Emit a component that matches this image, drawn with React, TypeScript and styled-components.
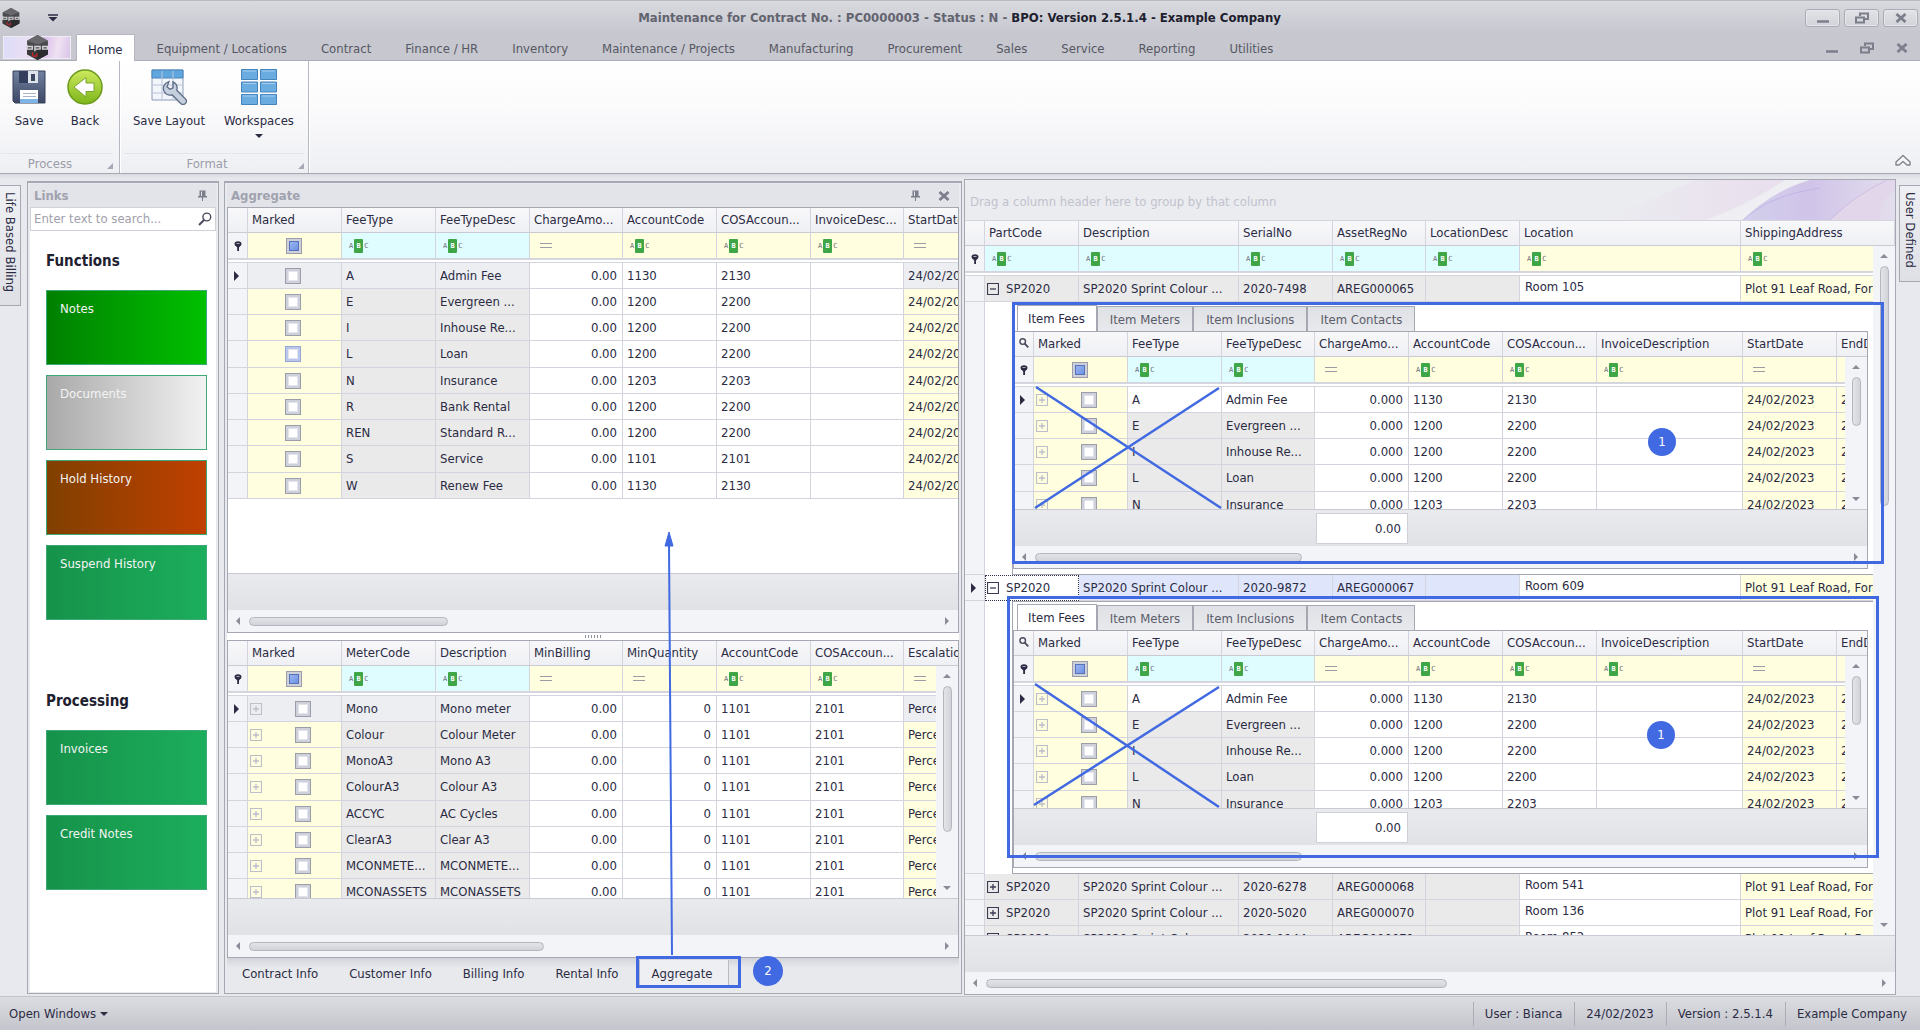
import React from "react";
import styled, { createGlobalStyle, css } from "styled-components";

/* ---------- theme values ---------- */
const c = {
  text: "#2b2b44",
  muted: "#9a9ca8",
  line: "#d3d4de",
  edge: "#a5a7b3",
  yellow: "#fffedf",
  cyan: "#dffdff",
  grey: "#eaeaea",
  active: "#eceef2",
  selected: "#dfe6fb",
  white: "#ffffff",
  mark: "#4169e1",
};

type Tone = "yellow" | "cyan" | "grey" | "white" | "active" | "selected";

const GlobalStyle = createGlobalStyle`
  *, *::before, *::after { box-sizing: border-box; }
  body {
    margin: 0;
    background: #e6e8ec;
    color: ${c.text};
    font: 13px/16px "DejaVu Sans Condensed", "DejaVu Sans", Tahoma, "Noto Sans", sans-serif;
  }
  button, input { font: inherit; color: inherit; }
  button { background: none; border: 0; padding: 0; margin: 0; }
`;

/* ---------- shell ---------- */
const Window = styled.div`
  position: relative;
  display: flex;
  flex-direction: column;
  height: 100vh;
  min-height: 720px;
  overflow: hidden;
`;

const TopArea = styled.header`
  background: linear-gradient(#d9dade, #c6c7cf 55%, #c6c7cf);
  border-top: 1px solid #b9bac2;
`;

const TitleBar = styled.div`
  display: grid;
  grid-template-columns: 120px 1fr 120px;
  align-items: center;
  height: 33px;
  padding: 0 2px 0 1px;
`;

const QuickAccess = styled.div`
  display: flex;
  align-items: center;
  gap: 27px;
`;

const Title = styled.h1`
  margin: 0;
  font-size: 13px;
  line-height: 16px;
  font-weight: bold;
  text-align: center;
  color: #62636f;
  white-space: nowrap;
  overflow: hidden;
  strong { color: #20202e; }
`;

const WindowButtons = styled.div`
  display: flex;
  justify-content: flex-end;
  gap: 4px;
`;

const FrameButton = styled.button<{ $flat?: boolean }>`
  display: flex;
  align-items: center;
  justify-content: center;
  width: 35px;
  height: 18px;
  color: #7c7e8c;
  ${(p) =>
    !p.$flat &&
    css`
      border: 1px solid #a9abb6;
      border-radius: 3px;
      background: linear-gradient(#e2e3e7, #d2d3d9);
      box-shadow: inset 0 0 0 1px #e6e7eb;
    `}
`;

const MenuRow = styled.nav`
  display: flex;
  align-items: flex-end;
  gap: 10px;
  height: 27px;
  border-bottom: 1px solid #a9abb6;
`;

const AppButton = styled.button`
  display: flex;
  align-items: center;
  justify-content: center;
  align-self: center;
  width: 68px;
  height: 23px;
  margin: 0 -5px 0 3px;
  border: 1px solid #f0ecf6;
  background: linear-gradient(100deg, #dcdcf8, #e9dff4 35%, #dcc0ea 60%, #efe2f2 80%, #d9c4e8);
`;

const MenuTab = styled.button<{ $active?: boolean }>`
  height: 26px;
  padding: 3px 12px 0;
  color: #565763;
  white-space: nowrap;
  ${(p) =>
    p.$active &&
    css`
      height: 27px;
      margin-bottom: -1px;
      padding: 3px 11px 0;
      color: ${c.text};
      background: #fff;
      border: 1px solid #b5b6c0;
      border-bottom: 0;
    `}
`;

const MdiButtons = styled.div`
  display: flex;
  margin: 0 1px 3px auto;
`;

/* ---------- ribbon ---------- */
const Ribbon = styled.section`
  display: flex;
  height: 113px;
  flex: none;
  background: linear-gradient(#ffffff, #fbfbfc 40%, #eeeff3);
  border-bottom: 1px solid ${c.edge};
`;

const Group = styled.div<{ $left: number; $right: number }>`
  display: flex;
  flex-direction: column;
  border-right: 1px solid #b6b8c2;
  box-shadow: 1px 0 0 #fff;
  padding: 0 ${(p) => p.$right}px 0 ${(p) => p.$left}px;
`;

const GroupTools = styled.div`
  display: flex;
  flex: 1;
`;

const Tool = styled.button<{ $w: number }>`
  display: flex;
  flex-direction: column;
  align-items: center;
  width: ${(p) => p.$w}px;
  padding-top: 8px;
  gap: 8px;
  white-space: nowrap;
`;

const ToolLabel = styled.span`
  display: flex;
  flex-direction: column;
  align-items: center;
  gap: 5px;
`;

const GroupTitle = styled.div`
  display: flex;
  align-items: center;
  height: 20px;
  color: ${c.muted};
  border-top: 1px solid #e4e5ea;
  span { flex: 1; text-align: center; padding-right: 8px; }
`;

const Corner = styled.svg`
  align-self: flex-end;
  margin-bottom: 4px;
`;

const CollapseButton = styled.button`
  margin: auto 9px 2px auto;
`;

/* ---------- docking area ---------- */
const Workspace = styled.main`
  display: flex;
  flex: 1;
  min-height: 0;
  padding-top: 5px;
  background: linear-gradient(#d9dbe0, #e8e9ee 5px);
`;

const SideTab = styled.button<{ $right?: boolean; $h: number }>`
  writing-mode: vertical-rl;
  width: 21px;
  height: ${(p) => p.$h}px;
  margin: 6px ${(p) => (p.$right ? 0 : 6)}px 0 ${(p) => (p.$right ? 3 : 0)}px;
  padding: 6px 0;
  text-align: left;
  white-space: nowrap;
  border: 1px solid ${c.edge};
  ${(p) => (p.$right ? "border-right: 0;" : "border-left: 0;")}
  background: linear-gradient(#eff0f4, #dfe0e5);
`;

const Panel = styled.section<{ $w: number }>`
  display: flex;
  flex-direction: column;
  flex: none;
  width: ${(p) => p.$w}px;
  margin: 2px 5px 2px 0;
  padding: 1px 2px;
  border: 1px solid ${c.edge};
  border-top-width: 2px;
  background: #e9eaee;
`;

const PanelTitle = styled.div`
  display: flex;
  align-items: center;
  height: 23px;
  flex: none;
  padding: 0 9px 0 4px;
  gap: 18px;
  background: #e3e4e9;
  h2 {
    flex: 1;
    margin: 0;
    font-size: 13px;
    line-height: 16px;
    color: #a0a2ae;
  }
`;

const IconButton = styled.button`
  display: flex;
  align-items: center;
  color: #7c7e8c;
`;

const SearchBox = styled.label`
  display: flex;
  align-items: center;
  flex: none;
  height: 24px;
  padding: 0 3px;
  background: #fff;
  border: 1px solid #cfd0d8;
`;

const SearchInput = styled.input`
  flex: 1;
  min-width: 0;
  padding: 0;
  border: 0;
  outline: 0;
  background: none;
  &::placeholder { color: #9fa0ab; opacity: 1; }
`;

const LinkList = styled.div`
  display: flex;
  flex-direction: column;
  flex: 1;
  gap: 10px;
  padding: 20px 9px 0 16px;
  background: #fff;
  overflow: hidden;
`;

const LinkHeading = styled.h3<{ $later?: boolean }>`
  margin: ${(p) => (p.$later ? "61px" : "0")} 0 9px;
  font-size: 15px;
  line-height: 20px;
  color: #20202e;
`;

const LinkTile = styled.button<{ $from: string; $to: string }>`
  display: flex;
  flex: none;
  height: 75px;
  padding: 10px 13px;
  color: #f4f4f4;
  border: 1px solid #3fa878;
  background: linear-gradient(90deg, ${(p) => p.$from}, ${(p) => p.$to});
`;

/* ---------- grid ---------- */
const GridBox = styled.div<{ $grow: number }>`
  display: flex;
  flex-direction: column;
  flex: ${(p) => p.$grow} 1 0;
  min-height: 0;
  min-width: 0;
  border: 1px solid ${c.edge};
  background: #fff;
`;

const GridBody = styled.div`
  display: grid;
  grid-template: 25px minmax(0, 1fr) / minmax(0, 1fr) 22px;
  flex: 1;
  min-height: 0;
  border-bottom: 1px solid #c9cad3;
`;

const TableClip = styled.div`
  grid-area: 1 / 1 / 3 / 3;
  overflow: hidden;
`;

const Table = styled.table<{ $stretch?: boolean }>`
  table-layout: fixed;
  width: ${(p) => (p.$stretch ? "100%" : "1px")};
  min-width: 100%;
  border-collapse: separate;
  border-spacing: 0;
`;

const headCell = css`
  height: 25px;
  padding: 0 5px 0 4px;
  overflow: hidden;
  white-space: nowrap;
  border-right: 1px solid ${c.line};
  border-bottom: 1px solid #c9cad3;
  background: linear-gradient(#f8f8fa, #eff0f4);
`;

const Th = styled.th`
  ${headCell}
  font-weight: normal;
  text-align: left;
`;

const ThIcon = styled.td`
  ${headCell}
  padding: 0 3px 0 5px;
`;

const Td = styled.td<{ $tone: Tone; $align?: "right" | "center"; $top?: boolean; $focus?: boolean }>`
  height: 26px;
  padding: 0 5px 0 4px;
  overflow: hidden;
  white-space: nowrap;
  text-align: ${(p) => p.$align || "left"};
  vertical-align: ${(p) => (p.$top ? "top" : "middle")};
  ${(p) => p.$top && "padding-top: 3px; padding-left: 5px;"}
  border-right: 1px solid ${c.line};
  border-bottom: 1px solid ${c.line};
  background: ${(p) => c[p.$tone]};
  ${(p) => p.$focus && "border: 1px dotted #33334a; padding-left: 3px;"}
`;

const Indicator = styled.td<{ $h?: number }>`
  height: ${(p) => p.$h || 26}px;
  padding: 0 0 0 6px;
  border-right: 1px solid ${c.line};
  border-bottom: 1px solid ${c.line};
  background: #f3f4f8;
  svg { display: block; }
`;

const SplitCell = styled.td`
  height: 4px;
  padding: 0;
  border-top: 1px solid #d6d7df;
  border-bottom: 1px solid ${c.line};
  background: #fff;
`;

const Row = styled.tr`
  &:nth-child(4n) > td { height: 27px; }
`;

const CellFlex = styled.div`
  display: flex;
  align-items: center;
  gap: 7px;
  margin-left: -2px;
`;

const CheckHolder = styled.div`
  display: flex;
  flex: 1;
  justify-content: center;
`;

const Check = styled.input<{ $look?: "filter" | "hot" }>`
  appearance: none;
  width: 16px;
  height: 16px;
  margin: 0;
  border: 1px solid ${(p) => (p.$look === "hot" ? "#9aa6cf" : "#9b9dab")};
  background: ${(p) => (p.$look === "filter" ? "linear-gradient(135deg, #a9c1f5, #5f86df)" : "#fff")};
  box-shadow: inset 0 0 0 2px ${(p) => (p.$look === "hot" ? "#b9c7ee" : "#cfd1da")}
    ${(p) => (p.$look === "filter" ? ", inset 0 0 0 3px #5871b8" : ", inset 0 0 0 3px #e4e5ec")};
`;

const ExpandButton = styled.button<{ $dim?: boolean }>`
  display: flex;
  flex: none;
  color: ${(p) => (p.$dim ? "#bdbfca" : "#3b3b54")};
`;

const Abc = styled.span`
  display: flex;
  align-items: center;
  gap: 1px;
  margin-left: 3px;
  font: 7px/14px "DejaVu Sans Mono", monospace;
  color: #6d6e78;
  b {
    width: 9px;
    border-radius: 1px;
    text-align: center;
    color: #fff;
    background: #3fa648;
  }
`;

const Equals = styled.span`
  display: block;
  width: 12px;
  height: 5px;
  margin-left: 6px;
  border: solid #9b9ca5;
  border-width: 1px 0;
`;

const Footer = styled.div`
  display: flex;
  flex: none;
  height: 36px;
  padding-left: 302px;
  align-items: center;
  background: linear-gradient(#e9eaee, #e1e2e6);
`;

const Summary = styled.output`
  width: 92px;
  height: 31px;
  padding: 7px 6px;
  text-align: right;
  background: #fff;
  border: 1px solid #cfd0d8;
`;

const HBar = styled.div`
  display: flex;
  align-items: center;
  flex: none;
  height: 22px;
  padding: 0 9px 0 8px;
  gap: 9px;
  color: #8a8c98;
  background: #f3f4f7;
`;

const HTrack = styled.div`
  flex: 1;
  display: flex;
`;

const HThumb = styled.div<{ $share: number }>`
  width: ${(p) => p.$share}%;
  height: 9px;
  border: 1px solid #b3b5bf;
  border-radius: 5px;
  background: linear-gradient(#e3e4e8, #d2d3d9);
`;

const VBar = styled.div`
  grid-area: 2 / 2;
  display: flex;
  flex-direction: column;
  align-items: center;
  padding: 8px 0;
  gap: 8px;
  color: #8a8c98;
  background: #f3f4f7;
  min-height: 0;
`;

const VTrack = styled.div`
  flex: 1;
  min-height: 0;
`;

const VThumb = styled.div<{ $share: number }>`
  width: 9px;
  height: ${(p) => p.$share}%;
  border: 1px solid #b3b5bf;
  border-radius: 5px;
  background: linear-gradient(90deg, #e3e4e8, #d2d3d9);
`;

const Splitter = styled.div`
  display: flex;
  align-items: center;
  justify-content: center;
  flex: none;
  height: 7px;
  background: #fff;
  span {
    width: 17px;
    height: 3px;
    background: repeating-linear-gradient(90deg, #8d8f9a 0 1px, transparent 1px 3px);
  }
`;

const BottomTabs = styled.div`
  display: flex;
  align-items: center;
  flex: none;
  height: 34px;
  padding-bottom: 2px;
  background: linear-gradient(#d2d4da, #e8e9ed 10px);
`;

const BottomTab = styled.button<{ $active?: boolean }>`
  height: 28px;
  padding: 0 16px 0 15px;
  white-space: nowrap;
  ${(p) =>
    p.$active &&
    css`
      margin-left: 4px;
      padding: 0 16px 0 12px;
      background: #eeeff2;
      border: solid #b9bbc5;
      border-width: 0 1px;
    `}
`;

/* ---------- right side ---------- */
const MasterPanel = styled.section`
  display: flex;
  flex-direction: column;
  flex: 1;
  min-width: 0;
  margin: 0 0 1px -3px;
  border: 1px solid ${c.edge};
  background: #ebecf0;
  & > div:last-child { border: 0; }
`;

const GroupPanel = styled.div`
  display: flex;
  justify-content: space-between;
  align-items: center;
  height: 41px;
  flex: none;
  padding-left: 5px;
  color: #c1c2cd;
  border-bottom: 1px solid ${c.line};
  span { padding-top: 3px; }
`;

const DetailCell = styled.td`
  height: 273px;
  padding: 0 21px 0 27px;
  background: #fff;
`;

const Detail = styled.div`
  display: flex;
  flex-direction: column;
  height: 273px;
  padding: 0 5px 5px 0;
  border: 1px solid ${c.edge};
  background: #fff;
`;

const DetailTabs = styled.div`
  display: flex;
  align-items: flex-end;
  height: 28px;
  flex: none;
  padding-left: 4px;
`;

const DetailTab = styled.button<{ $active?: boolean }>`
  height: ${(p) => (p.$active ? 27 : 25)}px;
  padding: ${(p) => (p.$active ? "0 11px 0 10px" : "2px 12px 0")};
  margin-bottom: ${(p) => (p.$active ? -1 : 0)}px;
  white-space: nowrap;
  border: 1px solid ${c.edge};
  border-bottom: 0;
  color: ${(p) => (p.$active ? c.text : "#5b5c6a")};
  background: ${(p) => (p.$active ? "#fff" : "linear-gradient(#e0e1e6, #e8e9ec)")};
`;

/* ---------- status bar ---------- */
const StatusBar = styled.footer`
  display: flex;
  align-items: center;
  flex: none;
  height: 34px;
  padding: 0 1px 0 9px;
  border-top: 1px solid #c2c4cc;
  background: linear-gradient(#dcdde2, #c4c5cc);
  white-space: nowrap;
`;

const OpenWindows = styled.button`
  display: flex;
  align-items: center;
  gap: 4px;
  margin-right: auto;
`;

const StatusItem = styled.span`
  padding: 4px 12px 4px 11px;
  border-left: 1px solid #aaacb7;
`;

/* ---------- annotations ---------- */
const Notes = styled.div`
  position: absolute;
  inset: 0;
  pointer-events: none;
`;

const NoteLines = styled.svg`
  position: absolute;
  inset: 0;
  width: 100%;
  height: 100%;
`;

const NoteBox = styled.div<{ $x: number; $y: number; $w: number; $h: number }>`
  position: absolute;
  left: ${(p) => p.$x}px;
  top: ${(p) => p.$y}px;
  width: ${(p) => p.$w}px;
  height: ${(p) => p.$h}px;
  border: 3px solid ${c.mark};
`;

const NoteDot = styled.span<{ $x: number; $y: number; $s: number }>`
  position: absolute;
  left: ${(p) => p.$x}px;
  top: ${(p) => p.$y}px;
  width: ${(p) => p.$s}px;
  height: ${(p) => p.$s}px;
  border-radius: 50%;
  background: ${c.mark};
  color: #fff;
  font-size: 13px;
  line-height: ${(p) => p.$s}px;
  text-align: center;
`;

/* ---------- icons ---------- */
const Logo = ({ size }: { size: number }) => (
  <svg width={size} height={size} viewBox="0 0 24 24" aria-hidden="true">
    <path d="M12 0 22 5.500v13L12 24 2 18.500V5.500z" fill="#4a4a4d" />
    <path d="M12 0 22 5.500 12 9 2 5.500z" fill="#68686c" />
    <path d="M2 14h20v4.500L12 24 2 18.500z" fill="#39393c" />
    <path d="M12 24V14h10v4.500z" fill="#2c2c2f" />
    <path d="M2 9.500v4h5v-2.500H2M9.500 15.500V11h5v2.500h-5M17 11h4.500v2.500H17z" stroke="#d6d6da" strokeWidth="1.300" fill="none" />
    <path d="M8 16.500a2.200 2.200 0 1 0 3.500 1.200M10.500 19l1.500 1.500" fill="none" stroke="#c8232b" strokeWidth="1.200" />
  </svg>
);

const Arrow = ({ dir, size = 5 }: { dir: "up" | "down" | "left" | "right"; size?: number }) => {
  const d = {
    up: "M0 10 10 0 20 10z",
    down: "M0 0h20L10 10z",
    left: "M10 0v20L0 10z",
    right: "M0 0v20L10 10z",
  }[dir];
  const flat = dir === "up" || dir === "down";
  return (
    <svg
      width={flat ? size * 2 : size}
      height={flat ? size : size * 2}
      viewBox={flat ? "0 0 20 10" : "0 0 10 20"}
      aria-hidden="true"
    >
      <path d={d} fill="currentColor" />
    </svg>
  );
};

const MinIcon = () => (
  <svg width="14" height="14" aria-hidden="true"><path d="M1 10.500h12" stroke="currentColor" strokeWidth="2.500" /></svg>
);
const RestoreIcon = () => (
  <svg width="14" height="12" fill="none" stroke="currentColor" strokeWidth="2" aria-hidden="true">
    <path d="M5 4V1.500h8v5.500h-3" /><path d="M1 5.500h8v5H1z" />
  </svg>
);
const CloseIcon = () => (
  <svg width="12" height="10" aria-hidden="true"><path d="M1.500 1 10.500 9M10.500 1 1.500 9" stroke="currentColor" strokeWidth="2.800" /></svg>
);
const PinIcon = () => (
  <svg width="9" height="11" aria-hidden="true">
    <path d="M1.500 0.500h6V6h1.500v1.500H5V11H4V7.500H0V6h1.500z" fill="currentColor" />
    <path d="M3.500 1.500v4.500" stroke="#e3e4e9" />
  </svg>
);
const LensIcon = ({ size, flip }: { size: number; flip?: boolean }) => (
  <svg width={size} height={size} viewBox="0 0 14 14" fill="none" stroke="#4a4a5c" aria-hidden="true">
    <g transform={flip ? "matrix(-1 0 0 1 14 0)" : undefined}>
      <circle cx="8.800" cy="5" r="3.900" strokeWidth={flip ? 2 : 1.4} /><path d="M6 8 1 13" strokeWidth={flip ? 2.6 : 2} />
    </g>
  </svg>
);
const FilterIcon = () => (
  <svg width="8" height="10" aria-hidden="true">
    <ellipse cx="4" cy="2.800" rx="3.500" ry="2.500" fill="#2b2b44" />
    <path d="M1 4h6L5 6.500V10H3.200V6.500z" fill="#2b2b44" /><path d="M2.500 2.500h3" stroke="#a9aab8" />
  </svg>
);
const BoxIcon = ({ open }: { open: boolean }) => (
  <svg width="12" height="12" fill="none" stroke="currentColor" aria-hidden="true">
    <path d="M.500.500h11v11H.500z" strokeWidth="1.200" /><path d={open ? "M3 6h6" : "M3 6h6M6 3v6"} strokeWidth="1.300" />
  </svg>
);
const SaveIcon = () => (
  <svg width="36" height="36" viewBox="0 0 36 36" aria-hidden="true">
    <defs><linearGradient id="fd" x1="0" y1="0" x2="0" y2="1"><stop stopColor="#7282a0" /><stop offset="1" stopColor="#3c4764" /></linearGradient></defs>
    <path d="M2 2h32v32H4l-2-2z" fill="url(#fd)" stroke="#36405a" />
    <path d="M8 2h19v12H8z" fill="#333d5c" /><path d="M17 2h10v12H17z" fill="#dfe4ec" /><path d="M20 5h4v7h-4z" fill="#3c4764" />
    <path d="M9 21h18v13H9z" fill="#fff" /><path d="M9 30h18v4H9z" fill="#7fb5e6" />
    <path d="M12 24.500h13M12 27.500h13" stroke="#a8b4c6" />
  </svg>
);
const BackIcon = () => (
  <svg width="36" height="36" viewBox="0 0 36 36" aria-hidden="true">
    <defs><linearGradient id="bk" x1="0" y1="0" x2="0" y2="1"><stop stopColor="#cdea5e" /><stop offset="1" stopColor="#7db51a" /></linearGradient></defs>
    <circle cx="18" cy="18" r="17" fill="url(#bk)" stroke="#6b9a1c" strokeWidth="1.500" />
    <path d="M7 18 19 8.500V14h8v8.500h-8V28z" fill="#fff" stroke="#7aa52c" />
  </svg>
);
const LayoutIcon = () => (
  <svg width="36" height="36" viewBox="0 0 36 36" aria-hidden="true">
    <path d="M1 1h31v30H1z" fill="#f2f5fa" stroke="#8d9bb8" />
    <path d="M1 1h31v8H1z" fill="#5fa6de" stroke="#4b86bd" />
    <path d="M1 16h31M1 24h31M11 2v29M22 2v29" stroke="#b9c5da" />
    <path d="M17 12.500c-5 1.500-7 6.500-4.500 10.500 2 3 5 3.500 7.500 2.800l9 9c3 2 7-1.500 4.800-4.500l-9-9c1-4-.8-7-3.800-8.500v6l-3 1.500-3-2.500z" transform="translate(1 0)" fill="#c6cfdd" stroke="#5c6a85" strokeWidth="1.300" />
  </svg>
);
const WorkspacesIcon = () => (
  <svg width="38" height="36" viewBox="0 0 38 36" fill="#6bace0" stroke="#4684bd" aria-hidden="true">
    <path d="M1.500.500h16v10h-16zM20.500.500h16v10h-16zM1.500 13h16v10h-16zM20.500 13h16v10h-16zM1.500 25.500h16v10h-16zM20.500 25.500h16v10h-16z" />
    <path d="M3 2h13M22 2h13M3 14.500h13M22 14.500h13M3 27h13M22 27h13" stroke="#a5cef0" />
  </svg>
);
const ChevronsIcon = () => (
  <svg width="16" height="13" viewBox="0 0 16 13" aria-hidden="true">
    <path d="M1 8 8 1.500 15 8v3h-3L8 7.500 4 11H1z" fill="#f6f6f8" stroke="#80828e" strokeWidth="1.400" strokeLinejoin="round" />
  </svg>
);
const Swirl = () => (
  <svg width="290" height="40" viewBox="0 0 290 40" aria-hidden="true">
    <defs>
      <linearGradient id="s1"><stop stopColor="#ebecf0" /><stop offset="1" stopColor="#e8d8ec" /></linearGradient>
      <linearGradient id="s2"><stop stopColor="#d3cfec" /><stop offset=".45" stopColor="#d0c4e9" /><stop offset="1" stopColor="#e3deec" /></linearGradient>
    </defs>
    <path d="M0 40 90 0h90Q140 26 100 40z" fill="url(#s1)" opacity=".7" />
    <path d="M100 40Q150 24 180 0h20Q160 18 136 40z" fill="#efeff3" />
    <path d="M138 40Q165 12 205 0h85v40z" fill="url(#s2)" />
    <path d="M225 40Q255 12 284 0h6v10Q270 25 275 40z" fill="#e2d6ea" />
    <path d="M138 40Q165 15 215 8" fill="none" stroke="#b79fe0" opacity=".5" />
    <path d="M225 40Q250 15 282 0" fill="none" stroke="#c3a4de" opacity=".5" />
  </svg>
);

/* ---------- data ---------- */
type Column = { label: string; width?: number; filter: "abc" | "num" | "check"; head: Tone; body: Tone; right?: boolean; top?: boolean };
const col = (label: string, width: number | undefined, filter: Column["filter"], head: Tone, body: Tone, right = false, top = false): Column => ({
  label, width, filter, head, body, right, top,
});

const feeColumns: Column[] = [
  col("Marked", 94, "check", "yellow", "yellow"),
  col("FeeType", 94, "abc", "cyan", "grey"),
  col("FeeTypeDesc", 94, "abc", "cyan", "grey"),
  col("ChargeAmo...", 93, "num", "yellow", "white", true),
  col("AccountCode", 94, "abc", "yellow", "white"),
  col("COSAccoun...", 94, "abc", "yellow", "white"),
  col("InvoiceDesc...", 93, "abc", "yellow", "white"),
  col("StartDate", 94, "num", "yellow", "yellow"),
];

const meterColumns: Column[] = [
  col("Marked", 94, "check", "yellow", "yellow"),
  col("MeterCode", 94, "abc", "cyan", "grey"),
  col("Description", 94, "abc", "cyan", "grey"),
  col("MinBilling", 93, "num", "yellow", "white", true),
  col("MinQuantity", 94, "num", "yellow", "white", true),
  col("AccountCode", 94, "abc", "yellow", "white"),
  col("COSAccoun...", 93, "abc", "yellow", "white"),
  col("Escalation", 94, "num", "yellow", "yellow"),
];

const itemColumns: Column[] = [
  col("Marked", 94, "check", "yellow", "yellow"),
  col("FeeType", 94, "abc", "cyan", "grey"),
  col("FeeTypeDesc", 93, "abc", "cyan", "grey"),
  col("ChargeAmo...", 94, "num", "yellow", "white", true),
  col("AccountCode", 94, "abc", "yellow", "white"),
  col("COSAccoun...", 94, "abc", "yellow", "white"),
  col("InvoiceDescription", 146, "abc", "yellow", "white"),
  col("StartDate", 94, "num", "yellow", "yellow"),
  col("EndDate", 94, "num", "yellow", "yellow"),
];

const masterColumns: Column[] = [
  col("PartCode", 94, "abc", "cyan", "grey"),
  col("Description", 160, "abc", "cyan", "grey"),
  col("SerialNo", 94, "abc", "cyan", "grey"),
  col("AssetRegNo", 93, "abc", "cyan", "grey"),
  col("LocationDesc", 94, "abc", "cyan", "grey"),
  col("Location", 221, "abc", "yellow", "white", false, true),
  col("ShippingAddress", undefined, "abc", "yellow", "yellow"),
];

const fees = [
  ["A", "Admin Fee", "1130", "2130"],
  ["E", "Evergreen ...", "1200", "2200"],
  ["I", "Inhouse Re...", "1200", "2200"],
  ["L", "Loan", "1200", "2200"],
  ["N", "Insurance", "1203", "2203"],
  ["R", "Bank Rental", "1200", "2200"],
  ["REN", "Standard R...", "1200", "2200"],
  ["S", "Service", "1101", "2101"],
  ["W", "Renew Fee", "1130", "2130"],
];
const date = "24/02/2023";
const feeRows = fees.map(([code, name, acc, cos]) => ["", code, name, "0.00", acc, cos, "", date]);
const itemRows = fees.slice(0, 5).map(([code, name, acc, cos]) => ["", code, name, "0.000", acc, cos, "", date, date]);
const meterRows = [
  ["Mono", "Mono meter"],
  ["Colour", "Colour Meter"],
  ["MonoA3", "Mono A3"],
  ["ColourA3", "Colour A3"],
  ["ACCYC", "AC Cycles"],
  ["ClearA3", "Clear A3"],
  ["MCONMETE...", "MCONMETE..."],
  ["MCONASSETS", "MCONASSETS"],
].map(([code, name]) => ["", code, name, "0.00", "0", "1101", "2101", "Percentage"]);

const masterRows = [
  { serial: "2020-7498", asset: "AREG000065", room: "Room 105", open: true },
  { serial: "2020-9872", asset: "AREG000067", room: "Room 609", open: true, current: true },
  { serial: "2020-6278", asset: "AREG000068", room: "Room 541" },
  { serial: "2020-5020", asset: "AREG000070", room: "Room 136" },
  { serial: "2020-1144", asset: "AREG000071", room: "Room 852" },
];

/* ---------- grid parts ---------- */
function GridHead({ columns, lens }: { columns: Column[]; lens?: boolean }) {
  return (
    <>
      <colgroup>
        <col style={{ width: 20 }} />
        {columns.map((k) => (
          <col key={k.label} style={{ width: k.width }} />
        ))}
      </colgroup>
      <thead>
        <tr>
          <ThIcon>{lens && <LensIcon size={10} flip />}</ThIcon>
          {columns.map((k) => (
            <Th key={k.label} scope="col">{k.label}</Th>
          ))}
        </tr>
        <tr>
          <Indicator><FilterIcon /></Indicator>
          {columns.map((k) => (
            <Td key={k.label} $tone={k.head}>
              {k.filter === "abc" && <Abc>A<b>B</b>C</Abc>}
              {k.filter === "num" && <Equals />}
              {k.filter === "check" && (
                <CheckHolder><Check type="checkbox" $look="filter" aria-label="Filter marked" /></CheckHolder>
              )}
            </Td>
          ))}
        </tr>
        <tr><SplitCell colSpan={columns.length + 1} /></tr>
      </thead>
    </>
  );
}

function HScroll({ share }: { share: number }) {
  return (
    <HBar>
      <Arrow dir="left" size={4} />
      <HTrack><HThumb $share={share} /></HTrack>
      <Arrow dir="right" size={4} />
    </HBar>
  );
}

function VScroll({ share }: { share: number }) {
  return (
    <VBar>
      <Arrow dir="up" size={4} />
      <VTrack><VThumb $share={share} /></VTrack>
      <Arrow dir="down" size={4} />
    </VBar>
  );
}

type GridProps = {
  columns: Column[];
  rows: string[][];
  grow: number;
  hShare: number;
  vShare?: number;
  expand?: boolean;
  lens?: boolean;
  firstTone: (k: Column) => Tone;
  hotRow?: number;
  summary?: string;
};

function Grid({ columns, rows, grow, hShare, vShare, expand, lens, firstTone, hotRow, summary }: GridProps) {
  return (
    <GridBox $grow={grow}>
      <GridBody>
        <TableClip>
          <Table>
            <GridHead columns={columns} lens={lens} />
            <tbody>
              {rows.map((cells, r) => (
                <Row key={r}>
                  <Indicator>{r === 0 && <Arrow dir="right" size={5} />}</Indicator>
                  {columns.map((k, i) => (
                    <Td key={k.label} $tone={r === 0 ? firstTone(k) : k.body} $align={k.right ? "right" : undefined}>
                      {k.filter === "check" ? (
                        <CellFlex>
                          {expand && (
                            <ExpandButton $dim aria-label={`Expand ${cells[1]}`}><BoxIcon open={false} /></ExpandButton>
                          )}
                          <CheckHolder>
                            <Check type="checkbox" $look={hotRow === r ? "hot" : undefined} aria-label={`Mark ${cells[1]}`} />
                          </CheckHolder>
                        </CellFlex>
                      ) : (
                        cells[i]
                      )}
                    </Td>
                  ))}
                </Row>
              ))}
            </tbody>
          </Table>
        </TableClip>
        {vShare !== undefined && <VScroll share={vShare} />}
      </GridBody>
      <Footer>{summary && <Summary>{summary}</Summary>}</Footer>
      <HScroll share={hShare} />
    </GridBox>
  );
}

const detailTabs = ["Item Fees", "Item Meters", "Item Inclusions", "Item Contacts"];

function ItemDetail() {
  return (
    <Detail>
      <DetailTabs>
        {detailTabs.map((t, i) => (
          <DetailTab key={t} $active={i === 0}>{t}</DetailTab>
        ))}
      </DetailTabs>
      <Grid
        columns={itemColumns}
        rows={itemRows}
        grow={1}
        hShare={33}
        vShare={44}
        expand
        lens
        firstTone={(k) => (k.body === "grey" ? "white" : k.body)}
        summary="0.00"
      />
    </Detail>
  );
}

function MasterGrid() {
  return (
    <GridBox $grow={1}>
      <GridBody>
        <TableClip>
          <Table $stretch>
            <GridHead columns={masterColumns} />
            <tbody>
              {masterRows.map((m) => {
                const soft: Tone = m.current ? "selected" : "grey";
                return (
                  <React.Fragment key={m.serial}>
                    <tr>
                      <Indicator>{m.current && <Arrow dir="right" size={5} />}</Indicator>
                      <Td $tone={m.current ? "white" : "grey"} $focus={m.current}>
                        <CellFlex>
                          <ExpandButton aria-label={`Toggle ${m.serial}`}><BoxIcon open={!!m.open} /></ExpandButton>
                          SP2020
                        </CellFlex>
                      </Td>
                      <Td $tone={soft}>SP2020 Sprint Colour ...</Td>
                      <Td $tone={soft}>{m.serial}</Td>
                      <Td $tone={soft}>{m.asset}</Td>
                      <Td $tone={soft} />
                      <Td $tone="white" $top>{m.room}</Td>
                      <Td $tone="yellow">Plot 91 Leaf Road, Forest</Td>
                    </tr>
                    {m.open && (
                      <tr>
                        <Indicator $h={273} />
                        <DetailCell colSpan={7}><ItemDetail /></DetailCell>
                      </tr>
                    )}
                  </React.Fragment>
                );
              })}
            </tbody>
          </Table>
        </TableClip>
        <VScroll share={37} />
      </GridBody>
      <Footer />
      <HScroll share={52} />
    </GridBox>
  );
}

const menu = [
  "Home", "Equipment / Locations", "Contract", "Finance / HR", "Inventory", "Maintenance / Projects",
  "Manufacturing", "Procurement", "Sales", "Service", "Reporting", "Utilities",
];

const green = { from: "#16924a", to: "#1cae5c" };
const functionLinks = [
  { label: "Notes", from: "#008000", to: "#00c000" },
  { label: "Documents", from: "#a9a9a9", to: "#f2f2f2" },
  { label: "Hold History", from: "#804000", to: "#c04000" },
  { label: "Suspend History", ...green },
];
const processingLinks = [{ label: "Invoices", ...green }, { label: "Credit Notes", ...green }];

const bottomTabs = ["Contract Info", "Customer Info", "Billing Info", "Rental Info", "Aggregate"];

const GroupCorner = () => (
  <Corner width="6" height="6" aria-hidden="true"><path d="M6 0v6H0z" fill="#a5a7b3" /></Corner>
);

export default function App() {
  const activeTone = (k: Column): Tone => (k.body === "white" ? "white" : "active");
  return (
    <Window>
      <GlobalStyle />
      <TopArea>
        <TitleBar>
          <QuickAccess>
            <Logo size={20} />
            <IconButton aria-label="Customise toolbar">
              <svg width="10" height="8" aria-hidden="true"><path d="M0 1h10" stroke="#2b2b44" strokeWidth="1.500" /><path d="M.500 3h9L5 7.500z" fill="#2b2b44" /></svg>
            </IconButton>
          </QuickAccess>
          <Title>
            Maintenance for Contract No. : PC0000003 - Status : N - <strong>BPO: Version 2.5.1.4 - Example Company</strong>
          </Title>
          <WindowButtons>
            <FrameButton aria-label="Minimise"><MinIcon /></FrameButton>
            <FrameButton aria-label="Restore"><RestoreIcon /></FrameButton>
            <FrameButton aria-label="Close"><CloseIcon /></FrameButton>
          </WindowButtons>
        </TitleBar>
        <MenuRow>
          <AppButton aria-label="Application menu"><Logo size={25} /></AppButton>
          {menu.map((m, i) => (
            <MenuTab key={m} $active={i === 0}>{m}</MenuTab>
          ))}
          <MdiButtons>
            <FrameButton $flat aria-label="Minimise document"><MinIcon /></FrameButton>
            <FrameButton $flat aria-label="Restore document"><RestoreIcon /></FrameButton>
            <FrameButton $flat aria-label="Close document"><CloseIcon /></FrameButton>
          </MdiButtons>
        </MenuRow>
      </TopArea>

      <Ribbon>
        <Group $left={1} $right={6}>
          <GroupTools>
            <Tool $w={56}><SaveIcon /><ToolLabel>Save</ToolLabel></Tool>
            <Tool $w={56}><BackIcon /><ToolLabel>Back</ToolLabel></Tool>
          </GroupTools>
          <GroupTitle><span>Process</span><GroupCorner /></GroupTitle>
        </Group>
        <Group $left={4} $right={4}>
          <GroupTools>
            <Tool $w={90}><LayoutIcon /><ToolLabel>Save Layout</ToolLabel></Tool>
            <Tool $w={90}><WorkspacesIcon /><ToolLabel>Workspaces<Arrow dir="down" size={4} /></ToolLabel></Tool>
          </GroupTools>
          <GroupTitle><span>Format</span><GroupCorner /></GroupTitle>
        </Group>
        <CollapseButton aria-label="Collapse ribbon"><ChevronsIcon /></CollapseButton>
      </Ribbon>

      <Workspace>
        <SideTab $h={121}>Life Based Billing</SideTab>
        <Panel $w={192}>
          <PanelTitle>
            <h2>Links</h2>
            <IconButton aria-label="Pin links"><PinIcon /></IconButton>
          </PanelTitle>
          <SearchBox>
            <SearchInput type="text" placeholder="Enter text to search..." aria-label="Search links" />
            <LensIcon size={14} />
          </SearchBox>
          <LinkList>
            <LinkHeading>Functions</LinkHeading>
            {functionLinks.map((l) => (
              <LinkTile key={l.label} $from={l.from} $to={l.to}>{l.label}</LinkTile>
            ))}
            <LinkHeading $later>Processing</LinkHeading>
            {processingLinks.map((l) => (
              <LinkTile key={l.label} $from={l.from} $to={l.to}>{l.label}</LinkTile>
            ))}
          </LinkList>
        </Panel>

        <Panel $w={738}>
          <PanelTitle>
            <h2>Aggregate</h2>
            <IconButton aria-label="Pin panel"><PinIcon /></IconButton>
            <IconButton aria-label="Close panel"><CloseIcon /></IconButton>
          </PanelTitle>
          <Grid columns={feeColumns} rows={feeRows} grow={426} hShare={29} firstTone={activeTone} hotRow={3} />
          <Splitter><span /></Splitter>
          <Grid columns={meterColumns} rows={meterRows} grow={317} hShare={43} vShare={76} expand firstTone={activeTone} />
          <BottomTabs>
            {bottomTabs.map((t) => (
              <BottomTab key={t} $active={t === "Aggregate"}>{t}</BottomTab>
            ))}
          </BottomTabs>
        </Panel>

        <MasterPanel>
          <GroupPanel>
            <span>Drag a column header here to group by that column</span>
            <Swirl />
          </GroupPanel>
          <MasterGrid />
        </MasterPanel>
        <SideTab $right $h={97}>User Defined</SideTab>
      </Workspace>

      <StatusBar>
        <OpenWindows>Open Windows <Arrow dir="down" size={4} /></OpenWindows>
        <StatusItem>User : Bianca</StatusItem>
        <StatusItem>24/02/2023</StatusItem>
        <StatusItem>Version : 2.5.1.4</StatusItem>
        <StatusItem>Example Company</StatusItem>
      </StatusBar>

      <Notes>
        <NoteLines stroke={c.mark} strokeWidth="2.500">
          <path d="M1036 387 1221 508M1219 388 1035 508M1035 684 1219 807M1219 687 1034 805" />
          <path d="M672 955 669 545" strokeWidth="2" />
          <path d="M669 532 673 546H665z" fill={c.mark} strokeWidth="1" />
        </NoteLines>
        <NoteBox $x={1012} $y={302} $w={872} $h={262} />
        <NoteBox $x={1007} $y={596} $w={872} $h={262} />
        <NoteBox $x={636} $y={956} $w={105} $h={32} />
        <NoteDot $x={1648} $y={428} $s={28}>1</NoteDot>
        <NoteDot $x={1647} $y={721} $s={28}>1</NoteDot>
        <NoteDot $x={753} $y={956} $s={30}>2</NoteDot>
      </Notes>
    </Window>
  );
}
